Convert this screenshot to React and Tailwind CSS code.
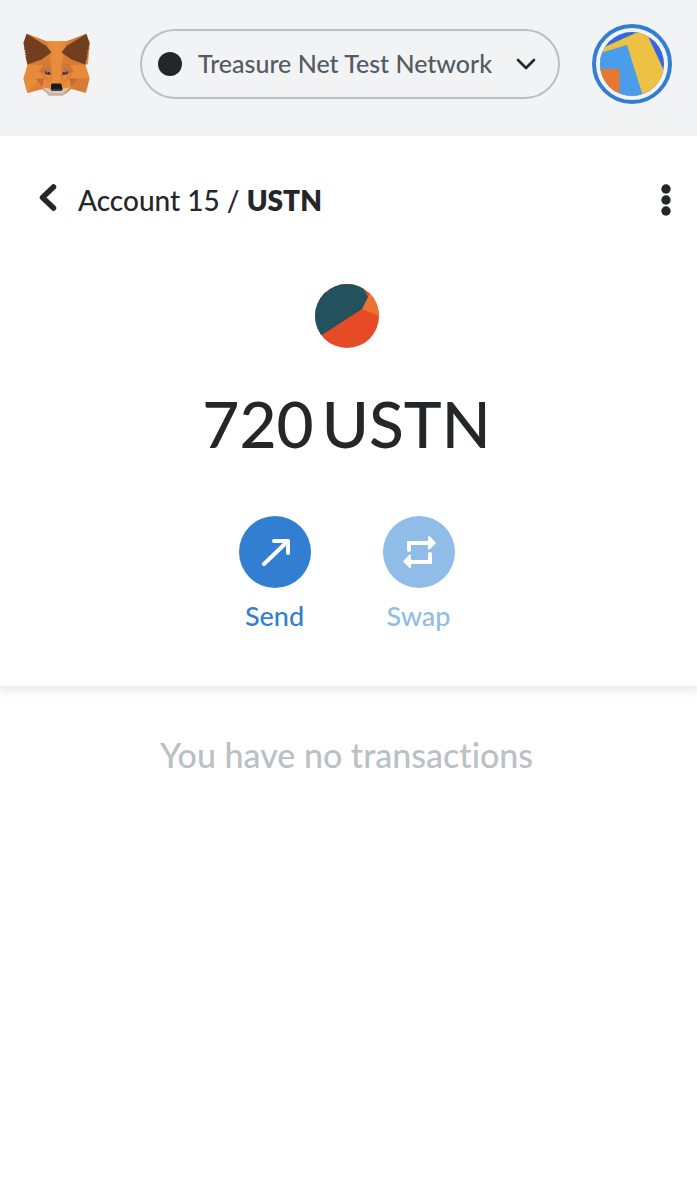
function FoxLogo() {
  return (
    <svg viewBox="10 14 200 188" className="h-[63px] w-[67px]" aria-hidden="true">
      <path fill="#e6893a" d="M21 16 81 39h58l60-23 10 33-5 57-8 5 11 38-11 43-42-11-18 16H86l-19-16-44 11-12-43 13-38-3-10-8-52z" />
      <path fill="#d67e3a" d="M21 16 82 39h14l-1 34-14 33-57 3 0-2 57-40zM199 16l-60 23h-15l1 34 13 33 57 3 0-2-57-40z" />
      <path fill="#e6893a" d="M81 39h58l-14 68 5 52h-40l5-52z" />
      <path fill="#e78b3b" d="m24 108 51-2-17 22 7 22-52-2zM196 108l-50-2 17 22-8 22 54-2z" />
      <path fill="#d67b37" d="m25 107 34-20 27-15 8 34-29 4zM195 107l-33-20-28-15-8 34 30 4z" />
      <path fill="#e88c3c" d="m12 151 55-1-44 43z" />
      <path fill="#d57a38" d="m209 149-55 1 1 30 43 12z" />
      <path fill="#df8139" d="m57 151-34 42 46-12-4-10z" />
      <path fill="#c76b31" d="m49 151 24-2-6 24zM172 151l-25-2 7 25z" />
      <path fill="#e78b3b" d="m73 150 23 16-1 17-26-11zM147 150l-22 16 1 17 27-11z" />
      <path fill="#d07636" d="m74 106 21 3-3 31-35-12zM146 106l-21 3 3 31 35-12z" />
      <path fill="#c9713a" d="m59 127 33-10 3 23-20-2zM161 127l-33-10-3 23 20-2z" />
      <path fill="#dc8039" d="m60 128 15 10 18 28-20-16zM160 128l-15 10-18 28 20-16z" />
      <path fill="#e88d3e" d="M95 39h30l-3 60 5 67h-34l5-67z" />
      <path fill="#dd8139" d="m95 106-6 32 5 28 4-26zM125 106l6 32-5 28-4-26z" />
      <path fill="#263447" d="m75 128 16 3 1 8-14-3zM145 128l-16 3-2 8 15-3z" />
      <path fill="#a9a097" d="m79 129 7 1-3 3zM140 129l-7 1 4 3z" />
      <path fill="#713f20" d="m21 16 59 37 15 19-30 21-41 15-7-25 4 0-6-7 5-1-6-6 5-1-7-7 3-1-4-16zM199 16l-59 37-15 19 30 21 40 15 8-25-4 0 6-7-5-1 6-6-5-1 7-7-3-1 4-16z" />
      <path fill="#c6b3a5" d="m69 177 23 3v4h35v-4l22-3-20 24H86z" />
      <path fill="#dbcbbf" d="m69 177 24 5 6 5h24l6-5 20-5-21 16H90z" />
      <path fill="#18191b" d="m94 167 3-2h25l3 2 3 17-3 2H96l-3-2z" />
      <path fill="#414141" d="M94 181h32v4H94z" />
    </svg>
  );
}

function AccountAvatar() {
  return (
    <svg viewBox="0 0 64 64" className="size-16 rounded-full" aria-hidden="true">
      <path fill="#3268dc" d="M0 0h64v64H0z" />
      <path fill="#ecc144" d="M0 17 38 0h8l19 41v23H0z" />
      <path fill="#4a9deb" d="m0 21 27-8 16 51H0z" />
      <path fill="#e87830" d="M0 37h19.500v27H0z" />
    </svg>
  );
}

function TokenIcon() {
  return (
    <svg viewBox="0 0 64 64" className="size-16 rounded-full" aria-hidden="true">
      <path fill="#e74a26" d="M0 0h64v64H0z" />
      <path fill="#e97530" d="m53 13 3-8h8v27L47 25z" />
      <path fill="#24525c" d="M0 0h46l7 13-6 12L7 51H0z" />
    </svg>
  );
}

export default function App() {
  return (
    <div className="min-h-screen bg-white font-['Lato',sans-serif] font-medium text-[#24272a] [font-variant-ligatures:none]">
      <header className="relative flex h-[136px] items-center gap-8 bg-[#f2f3f5] pb-2 pl-[23px] pr-[25px]">
        <button type="button" aria-label="Home" className="shrink-0">
          <FoxLogo />
        </button>
        <button
          type="button"
          className="ml-auto flex h-[70px] w-[420px] items-center rounded-full border-2 border-[#bbc0c5] px-4"
        >
          <span className="size-6 shrink-0 rounded-full bg-[#24272a]" />
          <span className="flex-1 whitespace-nowrap pl-4 text-left text-[25px] text-[#535a61]">
            Treasure Net Test Network
          </span>
          <svg viewBox="0 0 20 12" className="mr-[6px] h-3 w-5" fill="none" stroke="currentColor" strokeWidth="2.600" strokeLinecap="round" strokeLinejoin="round" aria-hidden="true">
            <path d="m2 2 8 8 8-8" />
          </svg>
        </button>
        <button
          type="button"
          aria-label="Account menu"
          className="grid size-20 shrink-0 place-items-center rounded-full border-4 border-[#327fd2]"
        >
          <AccountAvatar />
        </button>
      </header>

      <main>
        <section className="bg-white pb-[50px] shadow-[0_4px_8px_2px_rgba(0,0,0,0.08)]">
          <nav className="flex h-32 items-center pl-9 pr-[25px]">
            <button type="button" aria-label="Back" className="mb-1 mr-[18px] grid h-8 w-6 place-items-center">
              <svg viewBox="0 0 20 30" className="h-[30px] w-5" fill="none" stroke="currentColor" strokeWidth="5.500" strokeLinecap="round" strokeLinejoin="round" aria-hidden="true">
                <path d="M15.500 4 4.500 14.500 15.500 25" />
              </svg>
            </button>
            <p className="text-[28px] leading-10">
              Account 15 / <strong className="font-extrabold">USTN</strong>
            </p>
            <button type="button" aria-label="Asset options" className="ml-auto">
              <svg viewBox="0 0 12 32" className="h-8 w-3" fill="currentColor" aria-hidden="true">
                <circle cx="6" cy="5" r="4.700" />
                <circle cx="6" cy="16" r="4.700" />
                <circle cx="6" cy="27" r="4.700" />
              </svg>
            </button>
          </nav>

          <div className="flex flex-col items-center pr-1 pt-5">
            <TokenIcon />
            <h1 className="mt-8 flex gap-2 text-[64px] leading-[88px]">
              <span>720</span>
              <span>USTN</span>
            </h1>
            <div className="mt-12 flex gap-[72px]">
              <button type="button" className="flex w-[72px] flex-col items-center gap-2 text-[#327fd2]">
                <span className="grid size-[72px] place-items-center rounded-full bg-[#327fd2] text-white">
                  <svg viewBox="0 0 30 30" className="size-[30px]" fill="none" stroke="currentColor" strokeWidth="4" strokeLinecap="round" strokeLinejoin="round" aria-hidden="true">
                    <path d="M4 27 28 4M14 4h14v12" />
                  </svg>
                </span>
                <span className="text-[27px] leading-10">Send</span>
              </button>
              <button type="button" disabled className="flex w-[72px] flex-col items-center gap-2 text-[#8fbde8]">
                <span className="grid size-[72px] place-items-center rounded-full bg-[#8fbde8] text-white">
                  <svg viewBox="0 0 34 34" className="size-[34px]" fill="none" stroke="currentColor" strokeWidth="4" strokeLinecap="round" aria-hidden="true">
                    <path strokeLinejoin="miter" d="M7 15V8h20M28 19v8H8" />
                    <path fill="currentColor" stroke="none" d="M26 1.500q1-1 2 0l6 6.500-6 6q-1 1-2 0zM9 32.500q-1 1-2 0L1 26.500 7 20q1-1 2 0z" />
                  </svg>
                </span>
                <span className="text-[27px] leading-10">Swap</span>
              </button>
            </div>
          </div>
        </section>

        <p className="pr-1 pt-[45px] text-center text-[34px] leading-[48px] text-[#bbc0c5]">
          You have no transactions
        </p>
      </main>
    </div>
  );
}
